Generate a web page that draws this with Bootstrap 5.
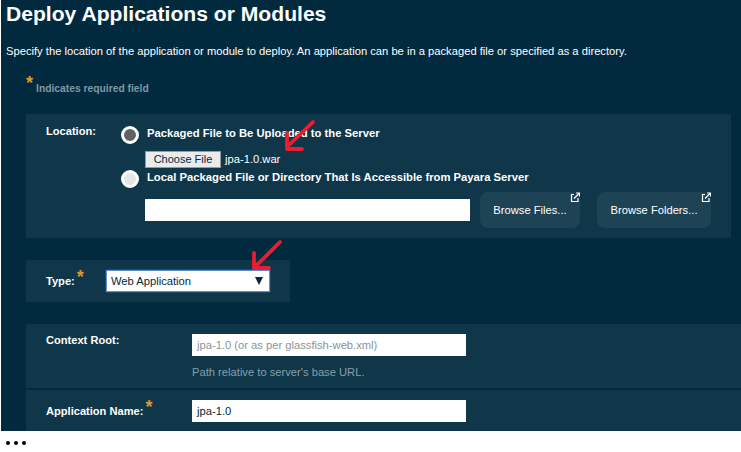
<!DOCTYPE html>
<html lang="en">
<head>
<meta charset="utf-8">
<title>Deploy Applications or Modules</title>
<link href="https://cdn.jsdelivr.net/npm/bootstrap@5.3.0/dist/css/bootstrap.min.css" rel="stylesheet">
<style>
html,body{margin:0;background:#fff;}
body{width:741px;height:452px;overflow:hidden;font-family:"Liberation Sans",Arial,sans-serif;font-size:11.2px;line-height:13px;color:#fff;}
.stage{position:relative;margin-left:1px;height:431px;background:#012a3e;overflow:hidden;}
.ttl{margin:0;padding:2px 0 0 5px;font-size:21.1px;line-height:24px;font-weight:700;color:#fff;}
.intro{margin:0;padding:19px 0 0 5px;font-size:11.2px;line-height:13px;color:#fff;}
.req{padding:22px 0 0 25px;height:56px;color:#7f98a3;font-weight:700;font-size:10.3px;line-height:13px;}
.star{color:#e2952f;font-size:18px;font-weight:700;line-height:13px;position:relative;top:-3px;margin-right:3px;}
.star-s{font-size:18px;color:#e2952f;font-weight:700;position:relative;top:-2px;margin-left:2px;line-height:10px;}
.panel{background:#0f3649;margin-left:25px;}
.p-loc{width:705px;height:124px;padding:10px 0 0 20px;}
.lab{font-weight:700;font-size:11.1px;color:#fff;}
.lab-col{width:75px;flex:none;padding-top:1px;}
.radio-dot{width:18px;height:18px;border-radius:50%;background:#e6e6e6;border:3px solid #fff;flex:none;display:block;margin-top:2px;}
.radio-dot.on{background:#5f6265;}
.opt{margin-left:8px;padding-top:3px;font-weight:700;font-size:11.25px;}
.filerow{margin:7px 0 0 24px;height:17px;display:flex;align-items:center;gap:4px;}
.pick{font:11px/13px "Liberation Sans",sans-serif;color:#012a3e;background:#ebebeb;border:1px solid #9a9a9a;padding:0 7px;height:17px;width:76px;white-space:nowrap;}
.fname{font-size:11.2px;}
.box{background:#fff;border:0;height:22px;display:block;font:11.2px/13px "Liberation Sans",sans-serif;color:#012a3e;padding:0 5px;}
.w-path{width:325px;margin-top:7px;}
.brw{position:relative;background:#1e4355;border:0;border-radius:8px;color:#fff;font:11.2px/13px "Liberation Sans",sans-serif;height:36px;padding:0;text-align:center;}
.brw svg{position:absolute;right:0;top:0;}
.b1{width:100px;margin-left:10px;}
.b2{width:114px;margin-left:17px;}
.brwrow{display:flex;align-items:flex-start;margin:4px 0 0 24px;}
.p-type{margin-top:22px;width:264px;height:42px;padding:10px 0 0 20px;display:flex;}
.p-type .lab{width:60px;flex:none;padding-top:4px;}
.sel{width:164px;height:22px;background:#fff;border:1px solid #5f8fd0;color:#012a3e;display:flex;align-items:center;justify-content:space-between;padding:0 5px 0 4px;font-size:11.2px;box-shadow:0 0 1px #7aa6dd;}
.caret{width:0;height:0;border-left:4px solid transparent;border-right:4px solid transparent;border-top:8px solid #012a3e;margin-right:1px;}
.p-ctx{margin-top:22px;width:716px;height:64px;padding:10px 0 0 20px;display:flex;}
.p-app{margin-top:2px;width:716px;padding:10px 0 0 20px;height:42px;display:flex;}
.lab-w{width:146px;flex:none;}
.w-in{width:274px;}
.ph{color:#87959c;}
.hint{color:#87a0ac;font-size:11.2px;margin-top:10px;}
.mark-arrow{position:absolute;pointer-events:none;}
.dots{display:flex;gap:4px;padding:10px 0 0 6px;}
.dots i{display:block;width:4px;height:4px;border-radius:50%;background:#000;}
</style>
</head>
<body>
<div class="stage">
  <h1 class="ttl">Deploy Applications or Modules</h1>
  <p class="intro">Specify the location of the application or module to deploy. An application can be in a packaged file or specified as a directory.</p>
  <div class="req"><span class="star">*</span>Indicates required field</div>

  <section class="panel p-loc d-flex">
    <div class="lab lab-col">Location:</div>
    <div class="flex-grow-1">
      <div class="d-flex"><span class="radio-dot on"></span><span class="opt">Packaged File to Be Uploaded to the Server</span></div>
      <div class="filerow"><button type="button" class="pick">Choose File</button><span class="fname">jpa-1.0.war</span></div>
      <div class="d-flex"><span class="radio-dot"></span><span class="opt">Local Packaged File or Directory That Is Accessible from Payara Server</span></div>
      <div class="brwrow">
        <input class="box w-path" type="text" aria-label="Local path">
        <button type="button" class="brw b1">Browse Files...<svg width="10" height="10" viewBox="0 0 10 10" fill="none" stroke="#fff"><path d="M4 2.5H1.5V9.5H8V6" stroke-width="1.2"/><path d="M4 6.5L9 1.5M6 1H9.5V4.5" stroke-width="1.2"/></svg></button>
        <button type="button" class="brw b2">Browse Folders...<svg width="10" height="10" viewBox="0 0 10 10" fill="none" stroke="#fff"><path d="M4 2.5H1.5V9.5H8V6" stroke-width="1.2"/><path d="M4 6.5L9 1.5M6 1H9.5V4.5" stroke-width="1.2"/></svg></button>
      </div>
    </div>
  </section>

  <section class="panel p-type">
    <div class="lab">Type:<span class="star-s">*</span></div>
    <div class="sel"><span>Web Application</span><span class="caret"></span></div>
  </section>

  <section class="panel p-ctx">
    <div class="lab lab-w">Context Root:</div>
    <div>
      <div class="box w-in ph d-flex align-items-center">jpa-1.0 (or as per glassfish-web.xml)</div>
      <div class="hint">Path relative to server's base URL.</div>
    </div>
  </section>
  <section class="panel p-app">
    <div class="lab lab-w pt-1">Application Name:<span class="star-s">*</span></div>
    <div class="box w-in d-flex align-items-center">jpa-1.0</div>
  </section>

  <svg class="mark-arrow" style="left:282px;top:118px" width="36" height="36" viewBox="0 0 36 36" fill="none" stroke="#ed1c2e" stroke-width="3.8" stroke-linecap="round" stroke-linejoin="round"><path d="M30 4L5 28M4 15V31H19"/></svg>
  <svg class="mark-arrow" style="left:250px;top:238px" width="34" height="34" viewBox="0 0 34 34" fill="none" stroke="#ed1c2e" stroke-width="3.8" stroke-linecap="round" stroke-linejoin="round"><path d="M29 4L4 29M3 15V30H18"/></svg>
</div>
<div class="dots" role="img" aria-label="more"><i></i><i></i><i></i></div>
<script src="https://cdn.jsdelivr.net/npm/bootstrap@5.3.0/dist/js/bootstrap.bundle.min.js"></script>
</body>
</html>
